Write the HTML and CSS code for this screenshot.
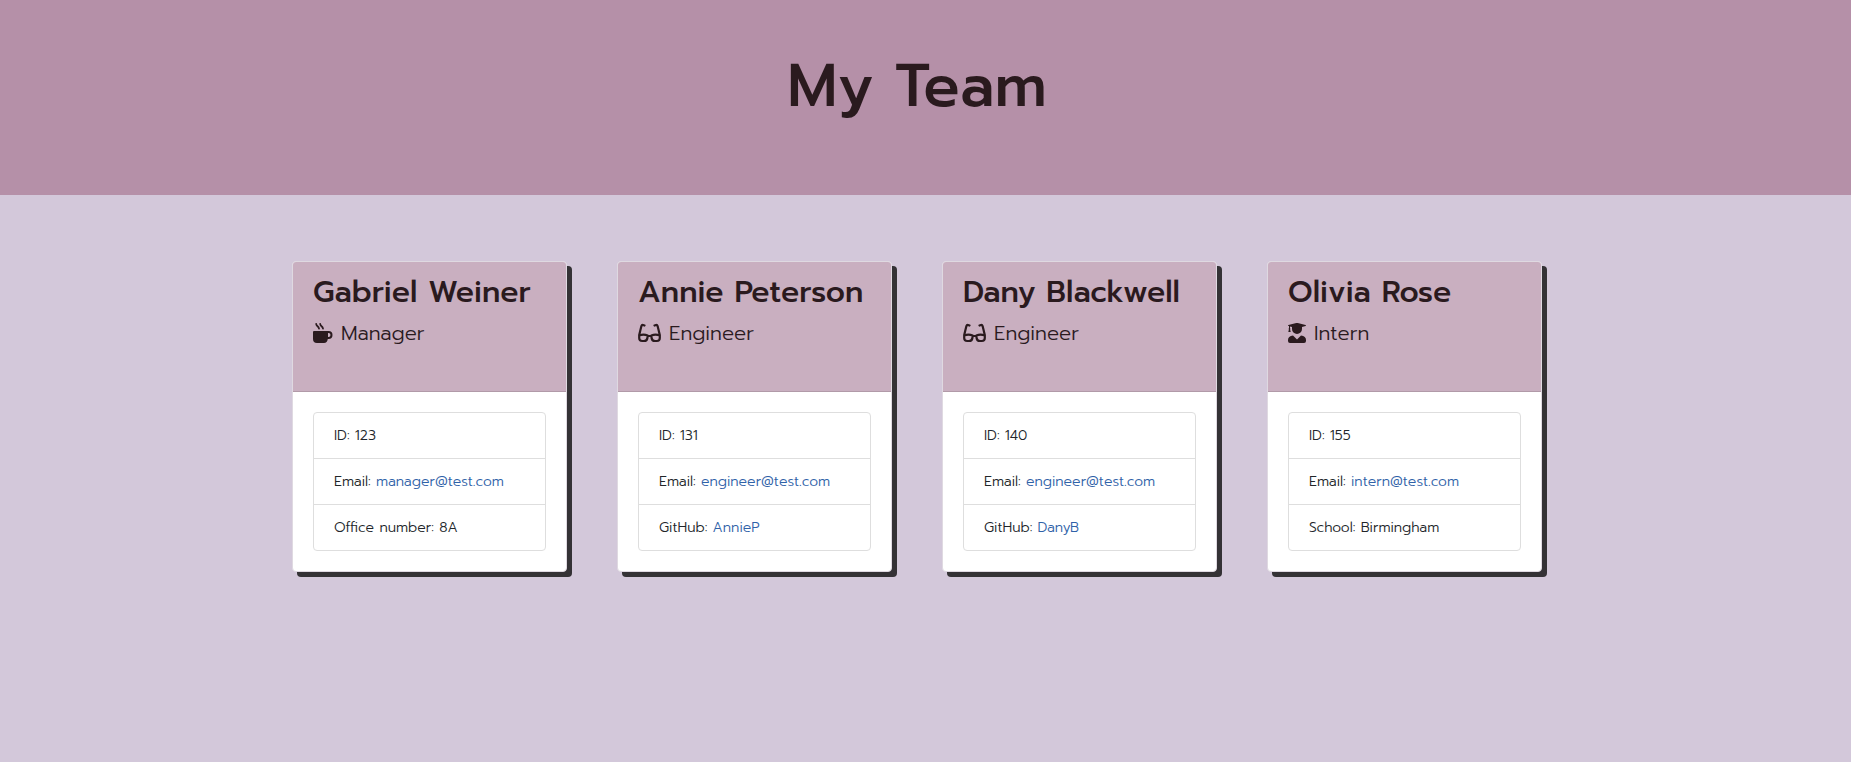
FILE: index.html
```html
<!DOCTYPE html>
<html lang="en">
<head>
<meta charset="utf-8">
<meta name="viewport" content="width=device-width, initial-scale=1">
<title>My Team</title>
<link rel="stylesheet" href="styles.css">
</head>
<body>
<svg class="sprite" aria-hidden="true">
  <symbol id="mug" viewBox="0 0 20 20">
    <path d="M0 9Q0 8 1 8H15.500A4 4 0 0 1 15.500 16H14.800Q14.200 20 11 20H4Q0 20 0 16ZM15 10V14H15.500A2 2 0 0 0 15.500 10Z" fill-rule="evenodd"/>
    <path d="M3.200 1C3.400 3.500 5.500 3 6 5.600M7.200 1C7.400 3.500 9.500 3 10 5.600" fill="none" stroke="currentColor" stroke-width="1.800" stroke-linecap="round"/>
  </symbol>
  <symbol id="glasses" viewBox="0 0 23 20">
    <path d="M6.500 2.500L5 2Q3.800 1.800 3.400 3L1.200 12V15Q1.200 18 4.200 18H6Q9 18 9.400 15L9.700 12.500Q5.500 10.800 1.200 12.500M16.500 2.500L18 2Q19.200 1.800 19.600 3L21.800 12V15Q21.800 18 18.800 18H17Q14 18 13.600 15L13.300 12.500Q17.500 10.800 21.800 12.500M9.600 13H13.400" fill="none" stroke="currentColor" stroke-width="2.200" stroke-linecap="round" stroke-linejoin="round"/>
  </symbol>
  <symbol id="graduate" viewBox="0 0 18 20">
    <path d="M.4 2.100L8.300.1Q9 0 9.700.1L17.600 2.100Q18.300 2.500 17.600 2.900L14 3.900V6A5 5 0 0 1 4 6V3.900L2 3.400V5.200Q2.700 5.800 2.100 6.500L2.700 9H.3L.9 6.500Q.3 5.800 1 5.200V3L.4 2.900Q-.3 2.500.4 2.100ZM5 12.500L9 16.500L13 12.500Q18 13 18 17V18Q18 20 16 20H2Q0 20 0 18V17Q0 13 5 12.500Z"/>
  </symbol>
</svg>
<header class="banner"><h1 class="banner-title">My Team</h1></header>
<main class="team">
  <article class="card">
    <header class="card-header">
      <h2 class="name">Gabriel Weiner</h2>
      <p class="role"><svg class="icon icon-mug" aria-hidden="true"><use href="#mug"/></svg>Manager</p>
    </header>
    <ul class="details">
      <li class="detail">ID: 123</li>
      <li class="detail">Email: <a class="link" href="mailto:manager@test.com">manager@test.com</a></li>
      <li class="detail">Office number: 8A</li>
    </ul>
  </article>
  <article class="card">
    <header class="card-header">
      <h2 class="name">Annie Peterson</h2>
      <p class="role"><svg class="icon icon-glasses" aria-hidden="true"><use href="#glasses"/></svg>Engineer</p>
    </header>
    <ul class="details">
      <li class="detail">ID: 131</li>
      <li class="detail">Email: <a class="link" href="mailto:engineer@test.com">engineer@test.com</a></li>
      <li class="detail">GitHub: <a class="link" href="https://github.com/AnnieP">AnnieP</a></li>
    </ul>
  </article>
  <article class="card">
    <header class="card-header">
      <h2 class="name">Dany Blackwell</h2>
      <p class="role"><svg class="icon icon-glasses" aria-hidden="true"><use href="#glasses"/></svg>Engineer</p>
    </header>
    <ul class="details">
      <li class="detail">ID: 140</li>
      <li class="detail">Email: <a class="link" href="mailto:engineer@test.com">engineer@test.com</a></li>
      <li class="detail">GitHub: <a class="link" href="https://github.com/DanyB">DanyB</a></li>
    </ul>
  </article>
  <article class="card">
    <header class="card-header">
      <h2 class="name">Olivia Rose</h2>
      <p class="role"><svg class="icon icon-graduate" aria-hidden="true"><use href="#graduate"/></svg>Intern</p>
    </header>
    <ul class="details">
      <li class="detail">ID: 155</li>
      <li class="detail">Email: <a class="link" href="mailto:intern@test.com">intern@test.com</a></li>
      <li class="detail">School: Birmingham</li>
    </ul>
  </article>
</main>
</body>
</html>
```
FILE: styles.css
```css
* { box-sizing: border-box; }
body {
  margin: 0;
  padding-right: 17px;
  background: #d3c8da;
  color: #212529;
  font-family: Prompt, Inter, sans-serif;
  font-size: 14px;
  font-weight: 300;
  line-height: 21px;
}
.sprite { display: none; }
.banner {
  margin-right: -17px;
  padding: 48px 17px 70px 0;
  background: #b590a8;
  color: #2a1a1e;
  text-align: center;
}
.banner-title {
  margin: 0;
  font-size: 60px;
  font-weight: 500;
  line-height: 77px;
}
.team {
  display: flex;
  flex-wrap: wrap;
  justify-content: center;
  gap: 50px;
  padding: 66px 16px 50px;
}
.card {
  width: 275px;
  border: 1px solid #dfd9e1;
  border-radius: 4px;
  background: #fff;
  box-shadow: 5px 5px #343235;
}
.card-header {
  padding: 12px 0 43px 20px;
  border-bottom: 1px solid #b19aa8;
  border-radius: 3px 3px 0 0;
  background: #c9afc0;
  color: #2a1a1e;
}
.name {
  margin: 0 0 8px;
  font-size: 30px;
  font-weight: 500;
  line-height: 36px;
  white-space: nowrap;
}
.role {
  display: flex;
  align-items: center;
  gap: 8px;
  margin: 0;
  font-size: 20px;
  line-height: 30px;
}
.icon { height: 20px; fill: currentColor; }
.icon-mug { width: 20px; }
.icon-glasses { width: 23px; }
.icon-graduate { width: 18px; }
.details {
  margin: 20px;
  padding: 0;
  border: 1px solid #dedede;
  border-radius: 4px;
  list-style: none;
}
.detail { padding: 12px 20px; white-space: nowrap; }
.detail + .detail { border-top: 1px solid #dedede; }
.link { color: #2f62a8; text-decoration: none; }
```
